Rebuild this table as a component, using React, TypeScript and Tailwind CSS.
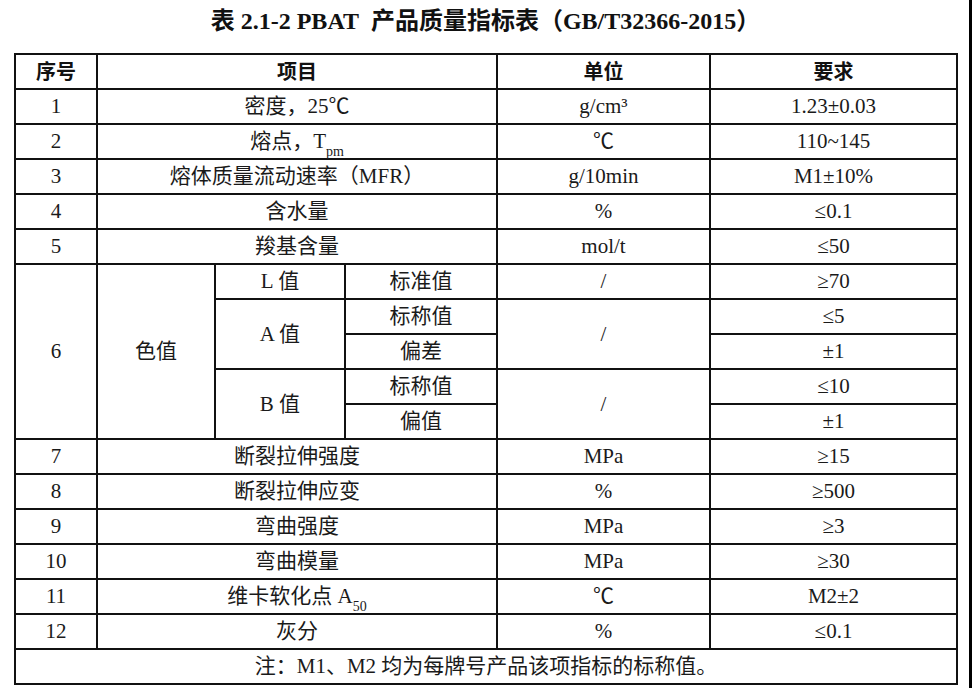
import React from "react";

const font = { fontFamily: '"Liberation Serif", "Noto Sans CJK SC", serif' };

const td = "border-2 border-[#111] text-center align-middle p-0 text-[21px] leading-none text-[#1a1a1a]";
const th = "border-2 border-[#111] text-center align-middle p-0 text-[20px] leading-none font-bold text-[#111]";

function Row({ children }: { children: React.ReactNode }) {
  return <tr className="h-[35px]">{children}</tr>;
}

type R = [string, React.ReactNode, React.ReactNode, React.ReactNode];

export default function App() {
  const simple: R[] = [
    ["1", "密度，25℃", "g/cm³", "1.23±0.03"],
    ["2", <>熔点，T<sub className="text-[14px] align-[-4px]">pm</sub></>, "℃", "110~145"],
    ["3", "熔体质量流动速率（MFR）", "g/10min", "M1±10%"],
    ["4", "含水量", "%", "≤0.1"],
    ["5", "羧基含量", "mol/t", "≤50"],
  ];
  const simple2: R[] = [
    ["7", "断裂拉伸强度", "MPa", "≥15"],
    ["8", "断裂拉伸应变", "%", "≥500"],
    ["9", "弯曲强度", "MPa", "≥3"],
    ["10", "弯曲模量", "MPa", "≥30"],
    ["11", <>维卡软化点 A<sub className="text-[14px] align-[-4px]">50</sub></>, "℃", "M2±2"],
    ["12", "灰分", "%", "≤0.1"],
  ];
  const renderSimple = (r: R) => (
    <Row key={r[0]}>
      <td className={td}>{r[0]}</td>
      <td className={td} colSpan={3}>{r[1]}</td>
      <td className={td}>{r[2]}</td>
      <td className={td}>{r[3]}</td>
    </Row>
  );
  return (
    <div className="flex w-[972px] h-[688px] bg-white overflow-hidden" style={font}>
      <div className="flex-1 flex flex-col">
        <div className="h-[53px] flex items-center justify-center pb-[11px] pl-[2px] text-[24px] font-bold text-[#111]">
          表 2.1-2 PBAT&nbsp;&nbsp;产品质量指标表（GB/T32366-2015）
        </div>
        <table className="ml-[14px] border-collapse table-fixed w-[942px]">
          <colgroup>
            <col className="w-[82px]" />
            <col className="w-[118px]" />
            <col className="w-[130px]" />
            <col className="w-[152px]" />
            <col className="w-[213px]" />
            <col className="w-[247px]" />
          </colgroup>
          <tbody>
            <Row>
              <td className={th}>序号</td>
              <td className={th} colSpan={3}>项目</td>
              <td className={th}>单位</td>
              <td className={th}>要求</td>
            </Row>
            {simple.map(renderSimple)}
            <Row>
              <td className={td} rowSpan={5}>6</td>
              <td className={td} rowSpan={5}>色值</td>
              <td className={td}>L 值</td>
              <td className={td}>标准值</td>
              <td className={td}>/</td>
              <td className={td}>≥70</td>
            </Row>
            <Row>
              <td className={td} rowSpan={2}>A 值</td>
              <td className={td}>标称值</td>
              <td className={td} rowSpan={2}>/</td>
              <td className={td}>≤5</td>
            </Row>
            <Row>
              <td className={td}>偏差</td>
              <td className={td}>±1</td>
            </Row>
            <Row>
              <td className={td} rowSpan={2}>B 值</td>
              <td className={td}>标称值</td>
              <td className={td} rowSpan={2}>/</td>
              <td className={td}>≤10</td>
            </Row>
            <Row>
              <td className={td}>偏值</td>
              <td className={td}>±1</td>
            </Row>
            {simple2.map(renderSimple)}
            <Row>
              <td className={td} colSpan={6}>注：M1、M2 均为每牌号产品该项指标的标称值。</td>
            </Row>
          </tbody>
        </table>
      </div>
      <div className="w-[3px] bg-black" />
    </div>
  );
}
